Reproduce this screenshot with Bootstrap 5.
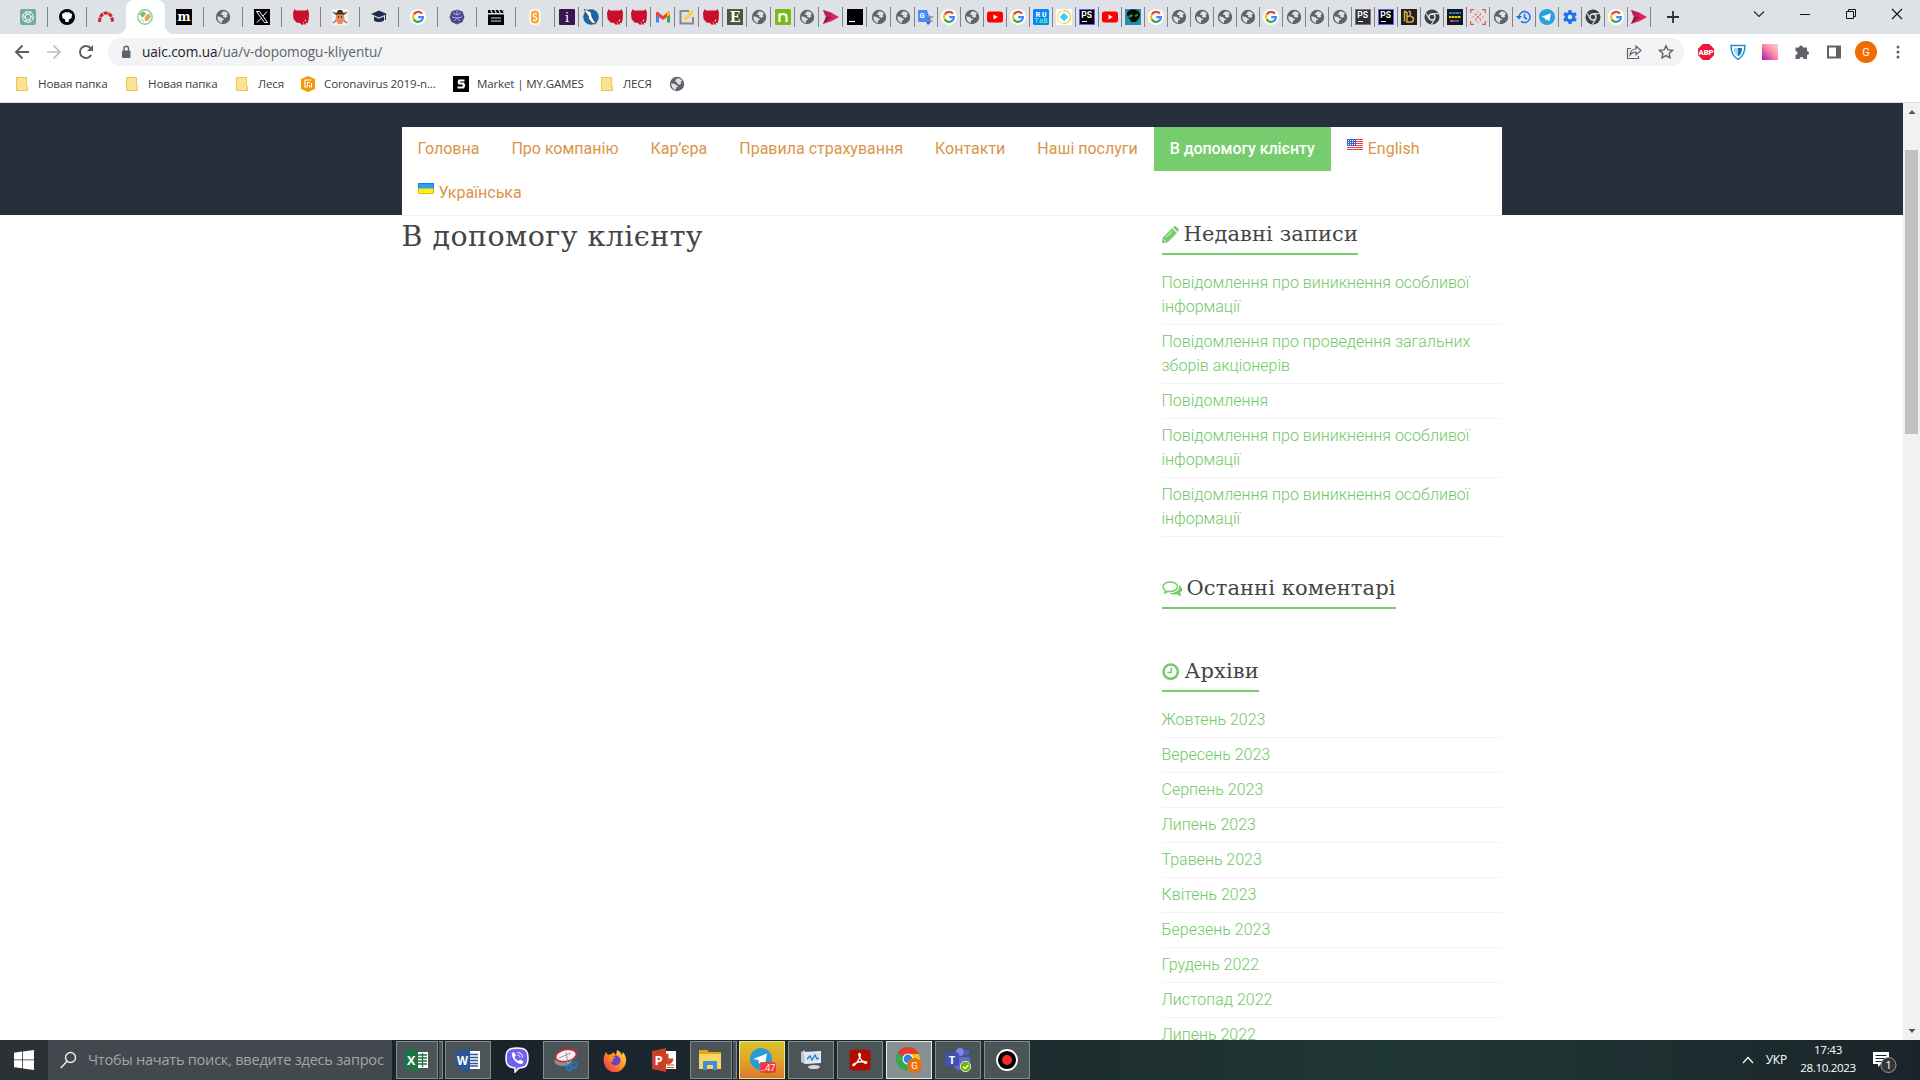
<!DOCTYPE html>
<html lang="uk">
<head>
<meta charset="utf-8">
<title>В допомогу клієнту</title>
<link rel="stylesheet" href="https://cdn.jsdelivr.net/npm/bootstrap@5.3.0/dist/css/bootstrap.min.css">
<style>
body{width:1920px;height:1080px;overflow:hidden;background:#fff;font-family:Roboto,sans-serif;line-height:1.5}
svg{display:block;flex:none}
.ui{font-family:"Open Sans","Noto Sans",sans-serif}
.strip{height:34px;background:#dee1e6;padding-left:9px}
.tab{width:39px;height:34px;padding-right:1px;position:relative;flex:none}
.tab.n24{width:24px}.tab.n23{width:23px}
.tab::after{content:"";position:absolute;right:0;top:7px;width:1px;height:20px;background:#808387}
.tab.on{background:#fff;border-radius:8px 8px 0 0}
.tab.on::after,.tab.pre::after{display:none}
.tab.on .foot{position:absolute;bottom:0;width:8px;height:8px}
.foot.l{left:-8px;background:radial-gradient(circle at 0 0,#dee1e6 7.5px,#fff 8px)}
.foot.r{right:-8px;background:radial-gradient(circle at 100% 0,#dee1e6 7.5px,#fff 8px)}
.plus{margin-left:14px;margin-top:9px}
.wins{margin-left:auto;padding-right:15px;padding-top:6px;gap:30px}
.toolbar{height:36px}
.navs{width:108px;padding-left:14px;gap:16px}
.omni{width:1576px;height:28px;border-radius:14px;background:#f1f3f4;padding:0 10px 0 13px;font-size:13.6px;color:#5f6368}
.omni .host{color:#202124}
.url{margin-left:11px;letter-spacing:-.05px;line-height:28px}
.exts{padding-left:14px;gap:16px}
.exts svg{width:16px;height:16px}
.exts .ava{width:22px;height:22px;margin:0 -3px}
.marks{height:32px;padding-left:14px;padding-bottom:5px;font-size:11.6px;color:#3c4043;letter-spacing:-.17px}
.bm{gap:8px;white-space:nowrap;flex:none;height:26px}
.bm-folder{width:110px}.bm-short{width:66px}.bm-cor{width:153px}.bm-game{width:146px}.bm-up{width:70px}
.edge{height:1px;background:#d6d8da}
.view{height:937px}
.site{width:1903px;overflow:hidden}
.top-band{background:#26303c;height:112px;padding-top:24px}
.wrap{width:1100px;margin:0 auto 0 401.5px}
.menu{height:89px;background:#fff;border-bottom:1px solid #f0f0f0}
.menu a{height:44px;line-height:43px;padding:0 16px;color:#d9954a;font-size:16px;text-decoration:none;white-space:nowrap}
.menu a.active{background:#77cc6d;color:#fff;font-weight:500;letter-spacing:-.08px}
.flagged{display:flex;gap:5px}
.flagged svg{margin-top:12px}
.body-row{padding-top:1px}
.slab{font-family:"Roboto Slab","DejaVu Serif",serif;color:#444;font-weight:400;margin:0;white-space:nowrap}
h1.slab{font-size:28.5px;line-height:41px;letter-spacing:.45px}
.side{width:340px;margin-left:auto}
h3.slab{display:inline-flex;font-size:21px;line-height:37px;height:39px;border-bottom:2px solid #77cc6d;gap:5px;margin-bottom:11px;vertical-align:top;letter-spacing:.1px}
h3.slab svg{margin-top:10px}
.side ul{margin:0;padding:0;list-style:none}
.side li{padding:5px 0;border-bottom:1px solid #f4f4f4;line-height:24px;font-size:16px;font-weight:300}
.side li a{color:#70c866;text-decoration:none}
.block{margin-bottom:33px}
.scroll{width:17px;background:#f1f1f1;padding:6px 0}
.thumb{width:13px;height:284px;background:#c1c1c1;margin-top:35px}
.task{height:40px;background:linear-gradient(90deg,#1c272c,#19242a 25%,#1e2f30 60%,#203835 72%,#1e3031 85%,#1b242a)}
.start{width:48px;background:#2b3237}
.find{width:344px;background:#42484d;color:#a3a6a8;font-size:14.6px;padding-left:12px;margin-right:4px}
.find span{margin-left:11px;white-space:nowrap;letter-spacing:-.25px}
.app{width:46px;height:38px;margin:1px 3px 0 0;flex:none;position:relative}
.open{background:#4b5558;border:1px solid #858c8f}
.multi{width:42px;margin-right:7px;padding-right:2px}
.multi::after{content:"";position:absolute;left:42px;top:-1px;width:4px;height:38px;background:#4b5558;border:1px solid #858c8f;border-left:0}
.hot{background:linear-gradient(#d6c42b,#e2a528 50%,#d9792b);border:1px solid #f3e38c}
.front{background:#8a8f91;border:1px solid #e8e8e8}
.tray{margin-left:auto;color:#fff;font-size:12px;padding-right:19px}
.clock{width:70px;line-height:18px;text-align:center;font-size:11.6px;letter-spacing:-.35px;margin-left:6px;white-space:nowrap;position:relative;top:-1px}
.lang{letter-spacing:-.2px}
</style>
<script src="https://cdn.jsdelivr.net/npm/bootstrap@5.3.0/dist/js/bootstrap.bundle.min.js"></script>
</head>
<body>
<svg width="0" height="0" class="position-absolute">
<defs>
<linearGradient id="gPink" x1="0" y1="1" x2="1" y2="0"><stop offset="0" stop-color="#a514b5"/><stop offset=".5" stop-color="#f883a8"/><stop offset="1" stop-color="#ffd9c2"/></linearGradient>
<linearGradient id="gFox" x1="1" y1="0" x2="0" y2="1"><stop offset="0" stop-color="#ffe14a"/><stop offset=".5" stop-color="#ff8a1f"/><stop offset="1" stop-color="#f02060"/></linearGradient>
</defs>
<symbol id="globe" viewBox="0 0 16 16"><circle cx="8" cy="8" r="7.200" fill="#5f6368"/><path d="M2.300 7.300l3.700.7 1.500 1.500 1.800.3-.8 1.200-1.500.5v2.400c-2.800-.4-4.900-3-4.700-6.600zM8.500 2.300c2 0 3.600 1 4.600 2.500L11.500 6l1 1.600-2 1.200L8 7.800l.3-1.800-2.500-.3 1-1.900z" fill="#dee1e6"/></symbol>
<symbol id="goog" viewBox="0 0 16 16"><circle cx="8" cy="8" r="8" fill="#fff"/><g fill="none" stroke-width="2.200"><path d="M12 4.600A5 5 0 0 0 3.700 5.600" stroke="#ea4335"/><path d="M3.700 5.500a5 5 0 0 0 0 5" stroke="#fbbc05"/><path d="M3.700 10.400a5 5 0 0 0 7.600 1.300" stroke="#34a853"/><path d="M11.200 11.800A5 5 0 0 0 12.900 8.200H8.200" stroke="#4285f4"/></g></symbol>
<symbol id="yt" viewBox="0 0 16 16"><rect y="2.500" width="16" height="11" rx="2.500" fill="#f00"/><path d="M6.500 5.500v5L10.800 8z" fill="#fff"/></symbol>
<symbol id="bull" viewBox="0 0 16 16"><path d="M1.500 0l1.500 1.500h10L14.500 0 16 3.500l-.3 7-1.200 4-1.500-1-.5 2.500-1.500-1-2 1-2-2-3.500-.5L.5 10 0 4z" fill="#c8102e"/><path d="M11.500 11.500l1.500-1v2zM9.500 14l1-1 .3 1.500z" fill="#fff"/></symbol>
<symbol id="play" viewBox="0 0 16 16"><path d="M0 1l9 3 7 4-7 4-9 3 3-7z" fill="#e0245e"/><path d="M0 1l9 3-2 4H3z" fill="#b8234f"/><path d="M3 8h6l-9 7z" fill="#8e1b3c"/></symbol>
<symbol id="chr" viewBox="0 0 16 16"><circle cx="8" cy="8" r="7.500" fill="#3c4043"/><circle cx="8" cy="8" r="3" fill="none" stroke="#dee1e6" stroke-width="1.400"/><path d="M8 4.600h6.500M5.200 9.700L2 4.200M10.800 9.700L7.500 15.200" stroke="#dee1e6" stroke-width="1.200"/></symbol>
<symbol id="tg" viewBox="0 0 16 16"><circle cx="8" cy="8" r="8" fill="#2aa1de"/><path d="M2.700 7.800l9.200-3.600-1.500 8-2.600-1.900-1.400 1.300-.3-2.400z" fill="#fff"/></symbol>
<symbol id="folder" viewBox="0 0 16 16"><path d="M2.500 1.500h10v9h1v4h-11z" fill="#fde293" stroke="#eac74f"/></symbol>
</svg>

<!-- Tab strip -->
<div class="strip d-flex">
<div class="tab d-flex align-items-center justify-content-center"><svg width="16" height="16" viewBox="0 0 16 16"><rect width="16" height="16" rx="2" fill="#74aa9c"/><g fill="none" stroke="#fff" stroke-width=".9"><circle cx="8" cy="8" r="5.400"/><path d="M8 5l2.600 1.500v3L8 11 5.400 9.500v-3zM8 5l3.500-2M10.600 6.500l2.500 3M10.600 9.500L9 13.300M8 11l-4 1.300M5.400 9.500L3 6M5.400 6.500L7 2.700"/></g></svg></div>
<div class="tab d-flex align-items-center justify-content-center"><svg width="16" height="16" viewBox="0 0 16 16"><circle cx="8" cy="8" r="8" fill="#050505"/><path d="M3 5l3-2 2 .5L10 3l3 2-.5 4L10 10.500 9.500 13h-3L6 10.500 3.500 9z" fill="#fff"/><path d="M2.500 3l3 1M13.500 3l-3 1" stroke="#000"/></svg></div>
<div class="tab pre d-flex align-items-center justify-content-center"><svg width="16" height="16" viewBox="0 0 16 16"><path d="M1.500 13C1.500 1 14.500 1 14.500 13" fill="none" stroke="#d3202b" stroke-width="3" stroke-dasharray="4.200 .8"/></svg></div>
<div class="tab on d-flex align-items-center justify-content-center"><i class="foot l"></i><i class="foot r"></i><svg width="16" height="16" viewBox="0 0 16 16"><circle cx="8" cy="8" r="7.200" fill="#fff" stroke="#7fcfa5" stroke-width="1.400"/><path d="M2.500 5L6 2.500l3 1.500-2 3.500-2 1z" fill="#77bb6c"/><path d="M9.500 5.500l3-1 1.500 3-2.500 4-3 1-1-3z" fill="#e8a951"/><path d="M4 10l3 3" stroke="#e8a951"/></svg></div>
<div class="tab d-flex align-items-center justify-content-center"><svg width="16" height="16" viewBox="0 0 16 16"><rect width="16" height="16" fill="#000"/><text x="8" y="12.300" text-anchor="middle" font-family="DejaVu Serif" font-weight="700" font-size="13" fill="#fff" textLength="13" lengthAdjust="spacingAndGlyphs">m</text></svg></div>
<div class="tab d-flex align-items-center justify-content-center"><svg width="16" height="16"><use href="#globe"/></svg></div>
<div class="tab d-flex align-items-center justify-content-center"><svg width="16" height="16" viewBox="0 0 16 16"><rect width="16" height="16" fill="#000"/><path d="M2.500 2.500h3l8 11h-3zM13 2.500L9 7M7 9.500l-4 4" stroke="#fff" fill="none"/></svg></div>
<div class="tab d-flex align-items-center justify-content-center"><svg width="16" height="16"><use href="#bull"/></svg></div>
<div class="tab d-flex align-items-center justify-content-center"><svg width="16" height="16" viewBox="0 0 16 16"><rect width="16" height="16" fill="#f6f2ee"/><path d="M1 3l14 11M15 3L1 14" stroke="#777" stroke-width="1.500"/><path d="M2 4l3-.5L6 1h4l1 2.500 3 .5-3 2H5z" fill="#4a3226"/><path d="M4.500 5.500h7l1 5L10 15H6l-2.500-4.500z" fill="#e98a5b"/><circle cx="6.500" cy="8" r=".8" fill="#222"/><circle cx="9.500" cy="8" r=".8" fill="#222"/></svg></div>
<div class="tab d-flex align-items-center justify-content-center"><svg width="16" height="16" viewBox="0 0 16 16"><path d="M0 5l8-3.500L16 5 8 8.500zM3 7.500l5 2.200 5-2.200v4c-3 2-7 2-10 0zM14 6v5h1V6z" fill="#1f2d50"/></svg></div>
<div class="tab d-flex align-items-center justify-content-center"><svg width="16" height="16"><use href="#goog"/></svg></div>
<div class="tab d-flex align-items-center justify-content-center"><svg width="16" height="16" viewBox="0 0 16 16"><path d="M8 .5l5.500 2L15.500 8l-2 5L8 15.500 2.500 13 .5 8l2-5.500z" fill="#4b4a8f"/><path d="M4 4l4 2 4-2M3 8l5 1 5-1M5 12l3-3 3 3M8 1v5" stroke="#b9b8dd" fill="none" stroke-width=".9"/></svg></div>
<div class="tab d-flex align-items-center justify-content-center"><svg width="16" height="16" viewBox="0 0 16 16"><path d="M0 5.500h16V16H0zM0 1h16v3H0z" fill="#000"/><path d="M2.500.5l2 4M6.500.5l2 4M10.500.5l2 4M14.500.5l2 4" stroke="#dee1e6" stroke-width="1.200"/><path d="M3 9h10M3 12h10" stroke="#dee1e6"/></svg></div>
<div class="tab d-flex align-items-center justify-content-center"><svg width="16" height="16" viewBox="0 0 16 16"><rect x="2.500" width="11" height="16" rx="4.500" fill="#fff"/><rect x="4" y="1.500" width="8" height="13" rx="3.500" fill="#f7a928"/><path d="M9.800 5.200C8 4 6 5 6.300 6.500S9.800 8 9.800 9.700 7.500 12 6 10.800" fill="none" stroke="#fff" stroke-width="1.300"/></svg></div>

<div class="tab n24 d-flex align-items-center justify-content-center"><svg width="16" height="16" viewBox="0 0 16 16"><rect width="16" height="16" rx="1" fill="#3b1450"/><text x="8" y="13" text-anchor="middle" font-family="DejaVu Serif" font-size="13" fill="#fff">i</text></svg></div>
<div class="tab n24 d-flex align-items-center justify-content-center"><svg width="16" height="16" viewBox="0 0 16 16"><circle cx="8" cy="8" r="7.800" fill="#1767a9"/><path d="M1 0l7 3 1 5 4 7-4-1-4-5 1-1L3 4z" fill="#fff" stroke="#222" stroke-width=".6"/></svg></div>
<div class="tab n24 d-flex align-items-center justify-content-center"><svg width="16" height="16"><use href="#bull"/></svg></div>
<div class="tab n24 d-flex align-items-center justify-content-center"><svg width="16" height="16"><use href="#bull"/></svg></div>
<div class="tab n24 d-flex align-items-center justify-content-center"><svg width="16" height="16" viewBox="0 0 16 16"><path d="M1 4v9.500h3V7z" fill="#4285f4"/><path d="M15 4v9.500h-3V7z" fill="#34a853"/><path d="M1 3.500l1.500-1L8 7l5.500-4.500 1.500 1V6L8 11 1 6z" fill="#ea4335"/><path d="M12 4l1.500-1.500L15 3.500V6l-3 2z" fill="#fbbc04"/></svg></div>
<div class="tab n24 d-flex align-items-center justify-content-center"><svg width="16" height="16" viewBox="0 0 16 16"><path d="M10 2H1.500v12.500H14V8" fill="none" stroke="#85888c" stroke-width="2"/><path d="M5 11V8.500L12.500 1 15 3.500 7.500 11z" fill="#fdd04a"/></svg></div>
<div class="tab n24 d-flex align-items-center justify-content-center"><svg width="16" height="16"><use href="#bull"/></svg></div>
<div class="tab n24 d-flex align-items-center justify-content-center"><svg width="16" height="16" viewBox="0 0 16 16"><rect width="16" height="16" fill="#48593a"/><text x="8" y="13" text-anchor="middle" font-family="DejaVu Serif" font-weight="700" font-size="14" fill="#fff">E</text></svg></div>
<div class="tab n24 d-flex align-items-center justify-content-center"><svg width="16" height="16"><use href="#globe"/></svg></div>
<div class="tab n24 d-flex align-items-center justify-content-center"><svg width="16" height="16" viewBox="0 0 16 16"><rect width="16" height="16" rx="1" fill="#7abc15"/><path d="M4.500 13V4.500M4.500 8c0-4 7-4 7 0v5" fill="none" stroke="#fff" stroke-width="2.200"/></svg></div>
<div class="tab n24 d-flex align-items-center justify-content-center"><svg width="16" height="16"><use href="#globe"/></svg></div>
<div class="tab n24 d-flex align-items-center justify-content-center"><svg width="16" height="16"><use href="#play"/></svg></div>
<div class="tab n24 d-flex align-items-center justify-content-center"><svg width="16" height="16" viewBox="0 0 16 16"><rect width="16" height="16"/><path d="M2 12.500h6" stroke="#fff" stroke-width="1.200"/></svg></div>
<div class="tab n24 d-flex align-items-center justify-content-center"><svg width="16" height="16"><use href="#globe"/></svg></div>
<div class="tab n24 d-flex align-items-center justify-content-center"><svg width="16" height="16"><use href="#globe"/></svg></div>

<div class="tab n23 d-flex align-items-center justify-content-center"><svg width="16" height="16" viewBox="0 0 16 16"><path d="M6 4h10v12h-5z" fill="#dfe3ea"/><path d="M0 1h9l4 12H1L0 12z" fill="#4a8af4"/><text x="1.500" y="9" font-family="Roboto" font-weight="700" font-size="7.500" fill="#fff">G</text><path d="M9.500 8h6M12.500 6.500V8c0 2-1 3-2 4M11 9c1 2 2 3 4 3.500" stroke="#6d7c91" fill="none"/><path d="M8 13h5l-3 3z" fill="#2a5fc9"/></svg></div>
<div class="tab n23 d-flex align-items-center justify-content-center"><svg width="16" height="16"><use href="#goog"/></svg></div>
<div class="tab n23 d-flex align-items-center justify-content-center"><svg width="16" height="16"><use href="#globe"/></svg></div>
<div class="tab n23 d-flex align-items-center justify-content-center"><svg width="16" height="16"><use href="#yt"/></svg></div>
<div class="tab n23 d-flex align-items-center justify-content-center"><svg width="16" height="16"><use href="#goog"/></svg></div>
<div class="tab n23 d-flex align-items-center justify-content-center"><svg width="16" height="16" viewBox="0 0 16 16"><rect width="16" height="16" rx="1.500" fill="#0a84ff"/><text x="2.500" y="7.500" font-family="Liberation Mono" font-weight="700" font-size="8" fill="#fff" textLength="11">RU</text><text x="1.500" y="14" font-family="Liberation Mono" font-weight="700" font-size="7" fill="#5df08b" textLength="13">TaB</text></svg></div>
<div class="tab n23 d-flex align-items-center justify-content-center"><svg width="16" height="16" viewBox="0 0 16 16"><rect width="16" height="16" fill="#fff"/><path d="M8 1.500a6.500 6.500 0 0 1 0 13" fill="none" stroke="#ffc833" stroke-width="1.300"/><path d="M8 1.500a6.500 6.500 0 0 0 0 13" fill="none" stroke="#f3e07a" stroke-width="1.300"/><path d="M8 3.800L12.200 8 8 12.200 3.800 8z" fill="#2fd0f5"/></svg></div>
<div class="tab n23 d-flex align-items-center justify-content-center"><svg width="16" height="16" viewBox="0 0 16 16"><rect width="16" height="16" fill="#6b57ff"/><rect x="1" y="1" width="14" height="14" fill="#000"/><text x="2.200" y="8.800" font-family="Roboto" font-weight="700" font-size="8.500" fill="#fff">PS</text><path d="M3 12.500h5" stroke="#fff"/></svg></div>
<div class="tab n23 d-flex align-items-center justify-content-center"><svg width="16" height="16"><use href="#yt"/></svg></div>
<div class="tab n23 d-flex align-items-center justify-content-center"><svg width="16" height="16" viewBox="0 0 16 16"><rect width="16" height="16" fill="#1e8fae"/><path d="M2 5c0-6 12-6 13 0 0 4-2 5-4 8H6c0-3-4-4-4-8z" fill="#050a06"/><path d="M3 7l4-2 1 2-4 2zM10 6l3-1v2l-3 1z" fill="#3c8f2d"/></svg></div>
<div class="tab n23 d-flex align-items-center justify-content-center"><svg width="16" height="16"><use href="#goog"/></svg></div>
<div class="tab n23 d-flex align-items-center justify-content-center"><svg width="16" height="16"><use href="#globe"/></svg></div>
<div class="tab n23 d-flex align-items-center justify-content-center"><svg width="16" height="16"><use href="#globe"/></svg></div>
<div class="tab n23 d-flex align-items-center justify-content-center"><svg width="16" height="16"><use href="#globe"/></svg></div>
<div class="tab n23 d-flex align-items-center justify-content-center"><svg width="16" height="16"><use href="#globe"/></svg></div>
<div class="tab n23 d-flex align-items-center justify-content-center"><svg width="16" height="16"><use href="#goog"/></svg></div>
<div class="tab n23 d-flex align-items-center justify-content-center"><svg width="16" height="16"><use href="#globe"/></svg></div>
<div class="tab n23 d-flex align-items-center justify-content-center"><svg width="16" height="16"><use href="#globe"/></svg></div>
<div class="tab n23 d-flex align-items-center justify-content-center"><svg width="16" height="16"><use href="#globe"/></svg></div>
<div class="tab n23 d-flex align-items-center justify-content-center"><svg width="16" height="16" viewBox="0 0 16 16"><rect width="16" height="16" fill="#777"/><rect x="1" y="1" width="14" height="14" fill="#333"/><text x="2.200" y="8.800" font-family="Roboto" font-weight="700" font-size="8.500" fill="#fff">PS</text><path d="M3 12.500h5" stroke="#fff"/></svg></div>
<div class="tab n23 d-flex align-items-center justify-content-center"><svg width="16" height="16" viewBox="0 0 16 16"><rect width="16" height="16" fill="#6b57ff"/><rect x="1" y="1" width="14" height="14" fill="#000"/><text x="2.200" y="8.800" font-family="Roboto" font-weight="700" font-size="8.500" fill="#fff">PS</text><path d="M3 12.500h5" stroke="#fff"/></svg></div>
<div class="tab n23 d-flex align-items-center justify-content-center"><svg width="16" height="16" viewBox="0 0 16 16"><rect width="16" height="16" fill="#241f19"/><path d="M3 2l3 1.500V13h3.500c4 0 4-5.500 0-5.500M6 7.500c5 0 4-5 1.500-5.500M3.500 3v9.500" fill="none" stroke="#d6a94e" stroke-width="1.500"/></svg></div>
<div class="tab n23 d-flex align-items-center justify-content-center"><svg width="16" height="16"><use href="#chr"/></svg></div>
<div class="tab n23 d-flex align-items-center justify-content-center"><svg width="16" height="16" viewBox="0 0 16 16"><rect width="16" height="16" fill="#15161a"/><path d="M2 4h12" stroke="#1683d8" stroke-width="2.200" stroke-dasharray="3 .5"/><path d="M2 8h12" stroke="#f3c614" stroke-width="2" stroke-dasharray="2.500 .5"/><path d="M3 12h3" stroke="#d94f3a" stroke-width="2"/><path d="M6 12h6" stroke="#3a5f85" stroke-width="2"/></svg></div>
<div class="tab n23 d-flex align-items-center justify-content-center"><svg width="16" height="16" viewBox="0 0 16 16"><path d="M.7 4V.7H4M12 .7h3.300V4M15.300 12v3.300H12M4 15.300H.7V12M5 4.500l1.500 2M11 4.500l-1.500 2M5 11.500l1.500-2M11 11.500l-1.500-2M3 7.500v1M13 7.500v1M7.500 3h1M7.500 13h1M7 8h2M8 7v2" fill="none" stroke="#f0563f" stroke-width="1.200"/></svg></div>
<div class="tab n23 d-flex align-items-center justify-content-center"><svg width="16" height="16"><use href="#globe"/></svg></div>
<div class="tab n23 d-flex align-items-center justify-content-center"><svg width="16" height="16" viewBox="0 0 16 16"><path d="M3 8a5.500 5.500 0 1 1 2 4.300M8.500 4.800V8.500l2.500 1.500" fill="none" stroke="#1a73e8" stroke-width="1.500"/><path d="M0 7h6l-3 3.500z" fill="#1a73e8"/></svg></div>
<div class="tab n23 d-flex align-items-center justify-content-center"><svg width="16" height="16"><use href="#tg"/></svg></div>
<div class="tab n23 d-flex align-items-center justify-content-center"><svg width="16" height="16" viewBox="0 0 16 16"><circle cx="8" cy="8" r="3.800" fill="none" stroke="#1a73e8" stroke-width="3"/><path d="M8 1v2.500M8 12.500V15M2 4.500l2.200 1.300M11.800 10.200L14 11.500M2 11.500l2.200-1.300M11.800 5.800L14 4.500" stroke="#1a73e8" stroke-width="3.200"/></svg></div>
<div class="tab n23 d-flex align-items-center justify-content-center"><svg width="16" height="16"><use href="#chr"/></svg></div>
<div class="tab n23 d-flex align-items-center justify-content-center"><svg width="16" height="16"><use href="#goog"/></svg></div>
<div class="tab n23 d-flex align-items-center justify-content-center"><svg width="16" height="16"><use href="#play"/></svg></div>
<svg class="plus" width="16" height="16" viewBox="0 0 16 16"><path d="M8 2v12M2 8h12" stroke="#2e3134" stroke-width="1.800"/></svg>
<div class="wins d-flex"><svg width="16" height="16" viewBox="0 0 16 16"><path d="M3 5.500l5 5 5-5" fill="none" stroke="#222" stroke-width="1.100"/></svg><svg width="16" height="16" viewBox="0 0 16 16"><path d="M3 8.500h10" stroke="#111"/></svg><svg width="16" height="16" viewBox="0 0 16 16"><path d="M3.500 5.500h7v7h-7zM5.500 5V3.500h7v7H11" fill="none" stroke="#111"/></svg><svg width="16" height="16" viewBox="0 0 16 16"><path d="M3 3l10 10M13 3L3 13" stroke="#111" stroke-width="1.100"/></svg></div>
</div>

<!-- Address bar -->
<div class="toolbar d-flex align-items-center ui">
<div class="navs d-flex"><svg width="16" height="16" viewBox="0 0 16 16"><path d="M15 8H2M8.500 1.500L2 8l6.500 6.500" fill="none" stroke="#5a5e63" stroke-width="1.900"/></svg><svg width="16" height="16" viewBox="0 0 16 16"><path d="M1 8h13M7.500 1.500L14 8l-6.500 6.500" fill="none" stroke="#babcbe" stroke-width="1.700"/></svg><svg width="16" height="16" viewBox="0 0 16 16"><path d="M13.200 11A6 6 0 1 1 12.500 4" fill="none" stroke="#5a5e63" stroke-width="1.900"/><path d="M15 1v6H9z" fill="#5a5e63"/></svg></div>
<div class="omni d-flex align-items-center"><svg width="10" height="14" viewBox="0 0 10 14"><rect x="1" y="5.500" width="8.500" height="7.500" rx="1" fill="#5f6368"/><path d="M3 6V3.500a2.200 2.200 0 0 1 4.500 0V6" fill="none" stroke="#5f6368" stroke-width="1.400"/></svg><span class="url"><span class="host">uaic.com.ua</span>/ua/v-dopomogu-kliyentu/</span>
<svg class="ms-auto me-3" width="16" height="16" viewBox="0 0 16 16"><path d="M5 4.500H1.500v10h11V12M4 11c.3-4 2.500-6 6-6V2l5 4.500-5 4.300V8C7.500 8 5.500 9 4 11z" fill="none" stroke="#5f6368" stroke-width="1.200"/></svg><svg width="16" height="16" viewBox="0 0 16 16"><path d="M8 1.800l1.900 4.100 4.500.5-3.300 3 .9 4.400L8 11.600l-4 2.200.9-4.400-3.300-3 4.500-.5z" fill="none" stroke="#5f6368" stroke-width="1.400"/></svg></div>
<div class="exts d-flex align-items-center"><svg viewBox="0 0 16 16"><path d="M4.800 0h6.400L16 4.800v6.400L11.200 16H4.800L0 11.200V4.800z" fill="#f0163c"/><text x="8" y="10.800" text-anchor="middle" font-family="Roboto" font-weight="900" font-size="7.600" fill="#fff">ABP</text></svg><svg viewBox="0 0 16 16"><path d="M1 1.500h14c0 7-2 11-7 14-5-3-7-7-7-14z" fill="#fff" stroke="#1c91d0" stroke-width="1.500"/><path d="M4 4h4v8.500C5 10.500 4 8 4 4z" fill="#9ed7f2"/><path d="M8 4h4c0 4-1 6.500-4 8.500z" fill="#1277b5"/></svg><svg viewBox="0 0 16 16"><rect width="16" height="16" fill="url(#gPink)"/></svg><svg viewBox="0 0 16 16"><path d="M1.500 3.500H5a2 2 0 1 1 4 0h4V7a2 2 0 1 1 0 4v4H9.500a2 2 0 0 0-4 0h-4v-4a2 2 0 0 0 0-4z" fill="#5f6368"/></svg><svg viewBox="0 0 16 16"><path d="M2 2.500h12v11H2z" fill="#fff" stroke="#5f6368" stroke-width="2"/><path d="M10 2h4v12h-4z" fill="#5f6368"/></svg><svg class="ava" viewBox="0 0 22 22"><circle cx="11" cy="11" r="11" fill="#ef6c00"/><text x="11" y="15" text-anchor="middle" font-family="Roboto" font-size="11" fill="#fff">G</text></svg><svg viewBox="0 0 16 16" fill="#5f6368"><circle cx="8" cy="3" r="1.500"/><circle cx="8" cy="8" r="1.500"/><circle cx="8" cy="13" r="1.500"/></svg></div>
</div>

<!-- Bookmarks -->
<div class="marks d-flex align-items-center ui">
<div class="bm bm-folder d-flex align-items-center"><svg width="16" height="16"><use href="#folder"/></svg>Новая папка</div>
<div class="bm bm-folder d-flex align-items-center"><svg width="16" height="16"><use href="#folder"/></svg>Новая папка</div>
<div class="bm bm-short d-flex align-items-center"><svg width="16" height="16"><use href="#folder"/></svg>Леся</div>
<div class="bm bm-cor d-flex align-items-center"><svg width="16" height="16" viewBox="0 0 16 16"><path d="M8 0l7 3v10l-7 3-7-3V3z" fill="#f29a0c"/><path d="M11 4H5v7h2M10 6.500H7.500V11M9.500 9v2.500M11.500 7v4.500" fill="none" stroke="#fff" stroke-width="1.100"/></svg><span>Coronavirus 2019-n...</span></div>
<div class="bm bm-game d-flex align-items-center"><svg width="16" height="16" viewBox="0 0 16 16"><rect width="16" height="16"/><path d="M11.500 4.500H6.200q-1 1.700 0 3h4q1.500 2 0 4H4.500" fill="none" stroke="#fff" stroke-width="2.200"/></svg>Market | MY.GAMES</div>
<div class="bm bm-up d-flex align-items-center"><svg width="16" height="16"><use href="#folder"/></svg>ЛЕСЯ</div>
<div class="bm d-flex align-items-center"><svg width="16" height="16"><use href="#globe"/></svg></div>
</div>
<div class="edge"></div>

<!-- Page -->
<div class="view d-flex">
<div class="site">
<header class="top-band">
<nav class="wrap menu d-flex flex-wrap align-content-start">
<a href="#">Головна</a><a href="#">Про компанію</a><a href="#">Кар’єра</a><a href="#">Правила страхування</a><a href="#">Контакти</a><a href="#">Наші послуги</a><a href="#" class="active">В допомогу клієнту</a><a href="#" class="flagged"><svg width="16" height="11" viewBox="0 0 16 11"><rect width="16" height="11" fill="#fff"/><path d="M0 .5h16M0 2.500h16M0 4.500h16M0 6.500h16M0 8.500h16M0 10.500h16" stroke="#e0443c"/><rect width="9" height="7" fill="#3c63d6"/><path d="M1 1.500h7M1 3.500h7M1 5.500h7" stroke="#fff" stroke-dasharray="1 1"/></svg>English</a><a href="#" class="flagged"><svg width="16" height="11" viewBox="0 0 16 11"><rect width="16" height="11" fill="#ffec1a"/><rect width="16" height="5.500" fill="#2f9df4"/><path d="M.5 5.500v5h15v-5" fill="none" stroke="#e3c000"/><path d="M.5 5.500v-5h15v5" fill="none" stroke="#0f80dc"/></svg>Українська</a>
</nav>
</header>
<div class="wrap body-row d-flex">
<main><h1 class="slab">В допомогу клієнту</h1></main>
<aside class="side">
<section class="block"><h3 class="slab"><svg width="17" height="18" viewBox="0 0 17 18"><path d="M.5 12L10 2l5 5-9.500 9.500-5.500.7z" fill="#77cc6d"/><path d="M11 1.200L12.500 0q1 0 2 1l2 2q.8 1 0 1.800L15.500 6z" fill="#77cc6d"/><path d="M4 11.500l6.500-6.500M1.500 13.500l2 2" stroke="#fff" stroke-width=".8"/></svg>Недавні записи</h3>
<ul><li><a href="#">Повідомлення про виникнення особливої інформації</a></li><li><a href="#">Повідомлення про проведення загальних зборів акціонерів</a></li><li><a href="#">Повідомлення</a></li><li><a href="#">Повідомлення про виникнення особливої інформації</a></li><li><a href="#">Повідомлення про виникнення особливої інформації</a></li></ul></section>
<section class="block"><h3 class="slab"><svg width="20" height="18" viewBox="0 0 20 18"><path d="M17 5c4 2.500 4 6 1 8l1.500 3c-2 0-3-.7-4.300-1.700-3 .6-5.700.3-7.700-1.300C14 13.500 18 10 17 5z" fill="#77cc6d"/><path d="M8.300 2C4.300 2 1 4 1 6.800c0 1.700 1.200 3 2.700 3.900L3 13l3-1.700C11.500 12 15.500 10 15.500 6.800 15.500 4 12.300 2 8.300 2z" fill="#fff" stroke="#77cc6d" stroke-width="1.500"/></svg>Останні коментарі</h3><ul></ul></section>
<section class="block"><h3 class="slab"><svg width="18" height="18" viewBox="0 0 18 18"><circle cx="8.700" cy="8.700" r="7.200" fill="none" stroke="#77cc6d" stroke-width="2.600"/><path d="M9.200 4.500v5H5.500" fill="none" stroke="#77cc6d" stroke-width="1.500"/></svg>Архіви</h3>
<ul><li><a href="#">Жовтень 2023</a></li><li><a href="#">Вересень 2023</a></li><li><a href="#">Серпень 2023</a></li><li><a href="#">Липень 2023</a></li><li><a href="#">Травень 2023</a></li><li><a href="#">Квітень 2023</a></li><li><a href="#">Березень 2023</a></li><li><a href="#">Грудень 2022</a></li><li><a href="#">Листопад 2022</a></li><li><a href="#">Липень 2022</a></li></ul></section>
</aside>
</div>
</div>
<div class="scroll d-flex flex-column align-items-center"><svg width="8" height="6" viewBox="0 0 8 6"><path d="M.5 5L4 1l3.500 4z" fill="#505050"/></svg><div class="thumb"></div><svg class="mt-auto" width="8" height="6" viewBox="0 0 8 6"><path d="M.5 1L4 5l3.500-4z" fill="#505050"/></svg></div>
</div>

<!-- Taskbar -->
<div class="task d-flex ui">
<div class="start d-flex align-items-center justify-content-center"><svg width="20" height="20" viewBox="0 0 20 20"><path d="M0 2.700l8.200-1.200v8H0zM9 1.400L20 0v9.500H9zM0 10.300h8.200v8L0 17.200zM9 10.300h11V20L9 18.500z" fill="#fff"/></svg></div>
<div class="find d-flex align-items-center"><svg width="17" height="18" viewBox="0 0 17 18"><circle cx="10.500" cy="6.500" r="5" fill="none" stroke="#eee" stroke-width="1.400"/><path d="M7 10.200L.8 17" stroke="#eee" stroke-width="1.500"/></svg><span>Чтобы начать поиск, введите здесь запрос</span></div>
<div class="app open multi d-flex align-items-center justify-content-center"><svg width="24" height="24" viewBox="0 0 24 24"><path d="M12 4h12v16H12z" fill="#fff"/><path d="M14 7h9M14 10h9M14 13h9M14 16h9M18.500 5v14" stroke="#1f7244" stroke-width="1.300"/><path d="M0 3l14-3v24L0 21z" fill="#1f7244"/><text x="3" y="16.500" font-family="Open Sans" font-weight="700" font-size="12.500" fill="#fff">X</text></svg></div>
<div class="app open d-flex align-items-center justify-content-center"><svg width="24" height="24" viewBox="0 0 24 24"><path d="M12 3h12v18H12z" fill="#fff"/><path d="M14 6.500h8M14 9.500h8M14 12.500h8M14 15.500h8M14 18h8" stroke="#2b579a" stroke-width="1.300"/><path d="M0 3l14-3v24L0 21z" fill="#2b579a"/><text x="1" y="16.500" font-family="Open Sans" font-weight="700" font-size="12" fill="#fff" textLength="11" lengthAdjust="spacingAndGlyphs">W</text></svg></div>
<div class="app d-flex align-items-center justify-content-center"><svg width="24" height="26" viewBox="0 0 24 26"><path d="M12 1c8 0 11 2 11 10 0 9-4 10-9 10l-4 4v-4C3 20 1 18 1 11 1 3 4 1 12 1z" fill="#7360f2" stroke="#fff" stroke-width="1.500"/><path d="M7 6l2-1 2 3.500-1.500 1.500c.8 2 2 3.200 4 4L15 12.500l3.500 2-1.500 2.500C12 17.500 6 11 7 6z" fill="#fff"/><path d="M12.500 5.500c3 0 5 2 5 5M12.500 8c1.500 0 2.500 1 2.500 2.500" stroke="#fff" fill="none"/></svg></div>
<div class="app open d-flex align-items-center justify-content-center"><svg width="24" height="24" viewBox="0 0 24 24"><ellipse cx="9" cy="13.500" rx="8.500" ry="4.500" fill="#8a8f93"/><ellipse cx="12" cy="7.500" rx="10.500" ry="5.800" transform="rotate(-12 12 7.500)" fill="#f4f4f4" stroke="#d9262d" stroke-width="1.500"/><path d="M5 10l12-5M12 4l2 12M14 16l5-6" stroke="#999" fill="none"/><circle cx="15" cy="20" r="2.500" fill="none" stroke="#2376c4" stroke-width="1.800"/><circle cx="20" cy="17" r="2.800" fill="none" stroke="#2376c4" stroke-width="1.800"/></svg></div>
<div class="app d-flex align-items-center justify-content-center"><svg width="24" height="24" viewBox="0 0 24 24"><path d="M3 4l2 3c2-1 3-1 4-1l1-2 3 3 1-5c3 1 4 3 5 5l1-3c3 4 4 8 2.500 12A11 11 0 0 1 1 15C0 11 1 7 3 4z" fill="url(#gFox)"/><circle cx="12.500" cy="12.500" r="5" fill="#6a3fd0"/><path d="M5 9c3-2 6-1 8 1-3 0-4 2-3 4-3 0-5-2-5-5z" fill="#ff8a1f"/></svg></div>
<div class="app d-flex align-items-center justify-content-center"><svg width="24" height="24" viewBox="0 0 24 24"><path d="M12 3h12v18H12z" fill="#fff"/><path d="M16 6a5 5 0 1 0 5 5h-5zM15 17h7M15 19.500h7" fill="#d24726" stroke="#d24726"/><path d="M0 3l14-3v24L0 21z" fill="#c8402a"/><text x="2.500" y="16.800" font-family="Open Sans" font-weight="700" font-size="13" fill="#fff">P</text></svg></div>
<div class="app open multi d-flex align-items-center justify-content-center"><svg width="24" height="20" viewBox="0 0 24 20"><path d="M1 0h8l2 2h12v17H1z" fill="#e8a317"/><path d="M1 4h22v15H1z" fill="#fcd462"/><path d="M5 11h14v9h-4v-5H9v5H5z" fill="#3b8fe0"/></svg></div>
<div class="app hot d-flex align-items-center justify-content-center"><svg width="28" height="28" viewBox="0 0 28 28"><circle cx="13" cy="13" r="11" fill="#2a9bd7"/><path d="M5 13l14-5.500-2 11-4-2.800-2 2-.5-3.700z" fill="#fff"/><rect x="12" y="16" width="16" height="11" rx="3" fill="#ee3d3d"/><text x="20" y="25" text-anchor="middle" font-family="Open Sans" font-size="9" fill="#fff">..47</text></svg></div>
<div class="app open d-flex align-items-center justify-content-center"><svg width="22" height="22" viewBox="0 0 22 22"><path d="M1 3l4-2v14l-4-2z" fill="#c2c6ca"/><path d="M4 3l17-1v12L5 15z" fill="#e9ecef"/><path d="M6.500 5l13-1v8l-13 1z" fill="#cfe3f3"/><path d="M7 10l3-3 2 4 3-5 2 4 2-1" fill="none" stroke="#2077b8" stroke-width="1.200"/><ellipse cx="14" cy="18" rx="6" ry="2" fill="#d5d8db"/></svg></div>
<div class="app open d-flex align-items-center justify-content-center"><svg width="22" height="22" viewBox="0 0 22 22"><rect x=".5" y=".5" width="21" height="21" rx="3" fill="#b30b00"/><path d="M10.500 4.500c2 0 .500 6-5 11.500-1.500 1.500-2.500 0-.5-1.200 3.500-2 8-2.500 11.500-2.200 2.500.4 1 2.500-1 1.300C11.500 12 8.500 4.500 10.500 4.500z" fill="none" stroke="#fff" stroke-width="1.300"/></svg></div>
<div class="app front d-flex align-items-center justify-content-center"><svg width="26" height="26" viewBox="0 0 26 26"><circle cx="12" cy="12" r="12" fill="#34a853"/><path d="M12 12L1.600 6A12 12 0 0 1 22.400 6z" fill="#e33b2e"/><path d="M12 7h10.900A12 12 0 0 1 12 24l5-9z" fill="#fbc116"/><circle cx="12" cy="12" r="5.500" fill="#fff"/><circle cx="12" cy="12" r="4.400" fill="#3b7de8"/><circle cx="18.500" cy="18.500" r="7.500" fill="#e8710a"/><text x="18.500" y="22" text-anchor="middle" font-family="Roboto" font-size="9.500" fill="#fff">G</text></svg></div>
<div class="app open d-flex align-items-center justify-content-center"><svg width="26" height="24" viewBox="0 0 26 24"><circle cx="15" cy="4" r="4" fill="#7b83eb"/><circle cx="21.500" cy="4.500" r="2.800" fill="#5059c9"/><path d="M9 9h11v8c0 7-11 7-11 0zM20 9h5v6c0 4-5 5-5 2z" fill="#6069d6"/><rect y="5" width="14" height="13" rx="1.500" fill="#464eb8"/><text x="7" y="15.500" text-anchor="middle" font-family="Open Sans" font-weight="700" font-size="11" fill="#fff">T</text><circle cx="20.500" cy="18.500" r="5.200" fill="#6bb700" stroke="#fff" stroke-width=".8"/><path d="M18 18.500l2 2 3.500-3.500" fill="none" stroke="#fff" stroke-width="1.300"/></svg></div>
<div class="app open d-flex align-items-center justify-content-center"><svg width="22" height="22" viewBox="0 0 22 22"><circle cx="11" cy="11" r="10" fill="#000" stroke="#fff" stroke-width="1.800"/><circle cx="11" cy="11" r="5" fill="#f52a2a"/></svg></div>
<div class="tray d-flex align-items-center"><svg class="me-2" width="12" height="8" viewBox="0 0 12 8"><path d="M1 7l5-5.500L11 7" fill="none" stroke="#fff" stroke-width="1.200"/></svg><span class="ps-1 lang">УКР</span><div class="clock">17:43<br>28.10.2023</div><svg class="ms-1" width="34" height="26" viewBox="0 0 34 26"><path d="M6 5h16v12h-8l-3 3v-3H6z" fill="#fff"/><path d="M8.500 8.500h11M8.500 11.500h11M8.500 14.500h6" stroke="#1b242a"/><circle cx="21.500" cy="20" r="7.500" transform="translate(0 -2)" fill="#30363a" stroke="#999" stroke-width="1"/><text x="21.500" y="22.300" text-anchor="middle" font-family="Open Sans" font-size="11.500" fill="#fff">1</text></svg></div>
</div>
</body>
</html>
